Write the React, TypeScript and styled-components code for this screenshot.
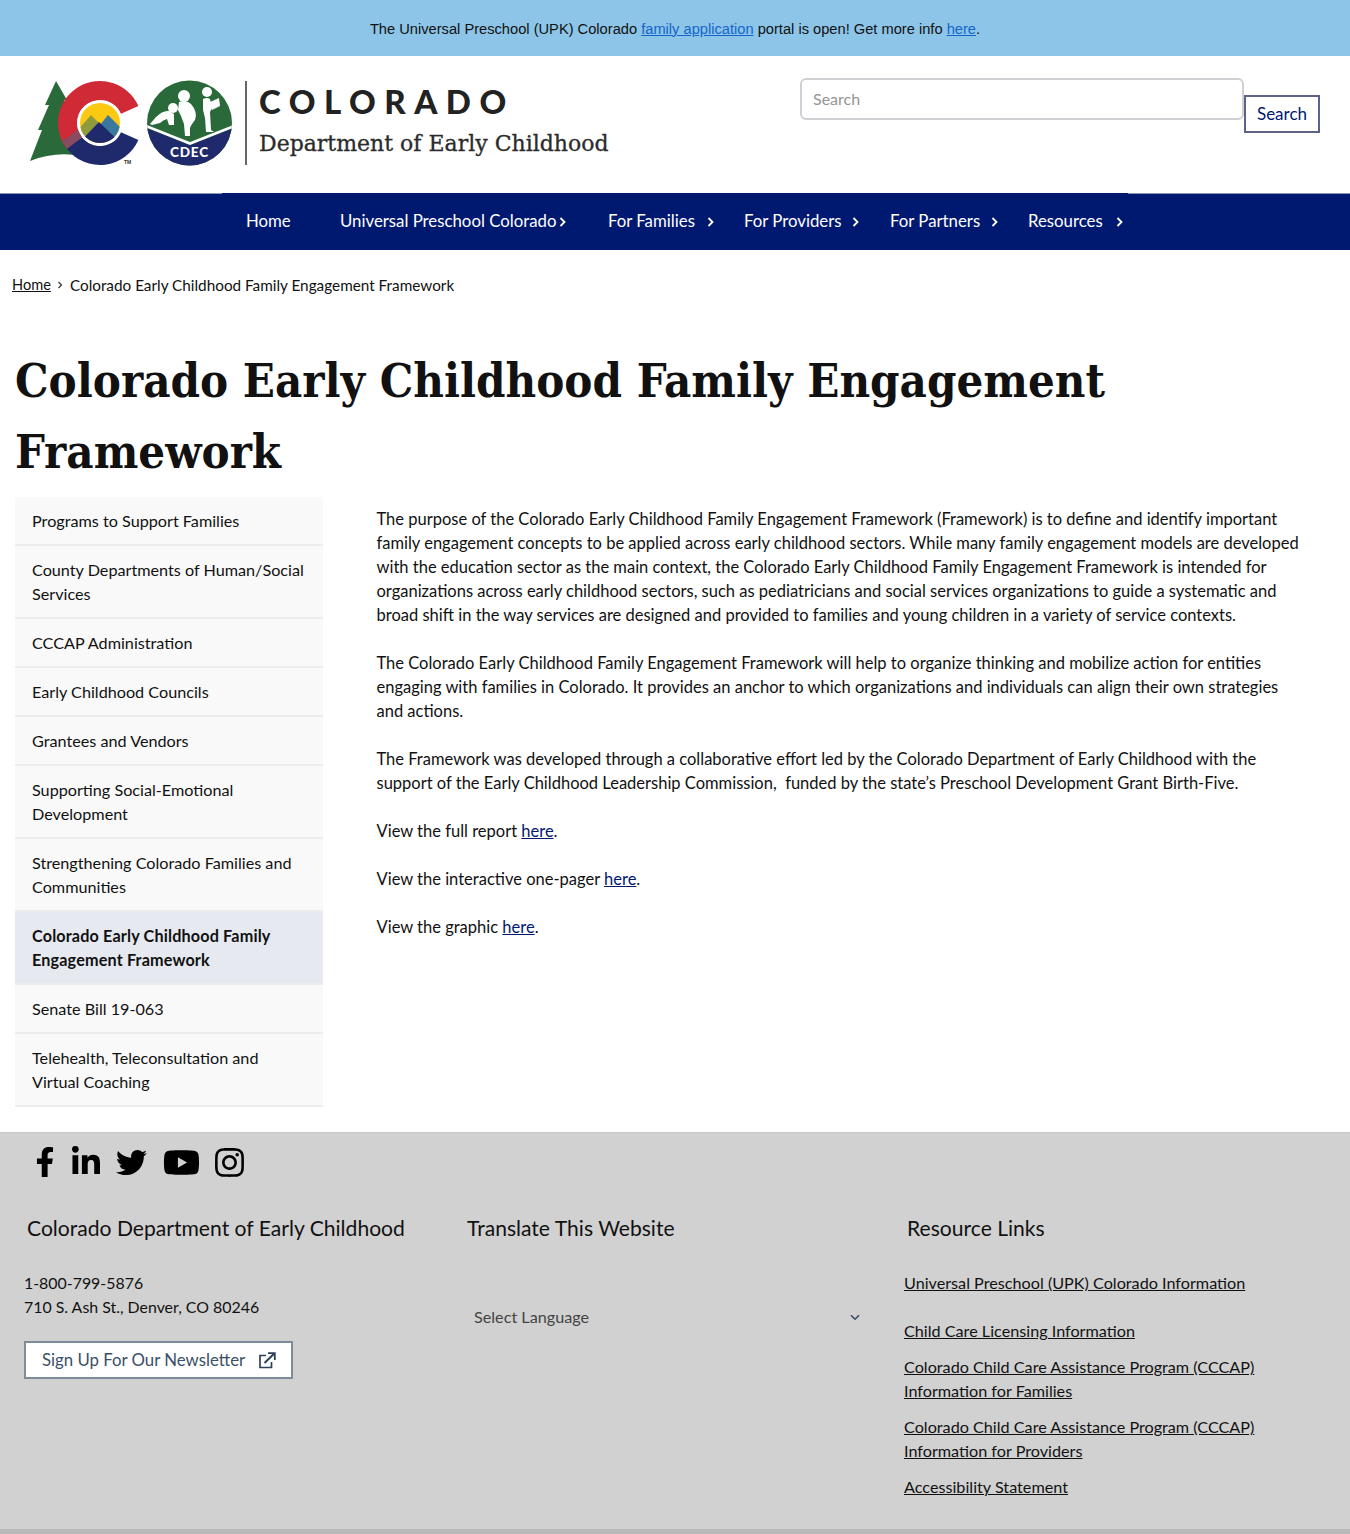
import React from "react";
import styled, { createGlobalStyle } from "styled-components";
import { FaFacebookF, FaLinkedinIn, FaTwitter, FaYoutube, FaInstagram } from "react-icons/fa";

const BODY = `"Lato", "Noto Sans", sans-serif`;
const SLAB = `"DejaVu Serif", "Liberation Serif", serif`;

const Global = createGlobalStyle`
  html, body { margin: 0; padding: 0; background: #fff; }
  body { font-family: ${BODY}; font-size: 16px; line-height: 24px; color: #111; }
  * { box-sizing: border-box; }
`;

const Banner = styled.div`
  height: 56px;
  padding-top: 1px;
  background: #8cc5e8;
  display: flex;
  align-items: center;
  justify-content: center;
  font-family: "Liberation Sans", Arial, sans-serif;
  font-size: 14.66px;
  color: #111;
  a { color: #1565c8; text-decoration: underline; }
`;

const Header = styled.header`
  height: 137px;
  display: flex;
  justify-content: space-between;
  padding: 22px 30px 0 30px;
`;

const Brand = styled.div`
  display: flex;
  align-items: flex-start;
  height: 90px;
`;

const Divider = styled.div`
  width: 2px;
  height: 84px;
  margin: 3px 12px 0 10px;
  background: #666;
`;

const Wordmark = styled.div`
  display: flex;
  flex-direction: column;
`;

const State = styled.div`
  font-family: "Lato", sans-serif;
  font-weight: 900;
  font-size: 33px;
  line-height: 40px;
  letter-spacing: 8.5px;
  color: #222;
  margin-top: 3px;
`;

const Dept = styled.div`
  font-family: ${SLAB};
  font-size: 22px;
  line-height: 30px;
  color: #2b2b2b;
  margin-top: 8px;
  -webkit-text-stroke: 0.3px #2b2b2b;
`;

const SearchForm = styled.form`
  display: flex;
  align-items: flex-start;
`;

const SearchInput = styled.input`
  width: 444px;
  height: 42px;
  border: 2px solid #d0d0d4;
  border-radius: 6px;
  padding: 0 11px 2px;
  font-family: ${BODY};
  font-size: 16px;
  &::placeholder { color: #949494; }
`;

const SearchButton = styled.button`
  width: 76px;
  height: 38px;
  margin-top: 17px;
  background: #fff;
  border: 2px solid #5c6288;
  font-family: ${BODY};
  font-size: 17px;
  color: #001970;
  padding: 0 0 2px;
`;

const NavBar = styled.nav`
  height: 57px;
  background: #001970;
  border-top: 1px solid #8797ad;
  padding-left: 222px;
`;

const NavList = styled.div`
  display: flex;
  width: 906px;
  height: 57px;
  margin-top: -1px;
  padding-bottom: 2px;
  background: #001970;
`;

const NavItem = styled.a<{ $w: number }>`
  position: relative;
  width: ${(p) => p.$w}px;
  padding: 0 0 0 24px;
  display: flex;
  align-items: center;
  color: #fff;
  font-size: 16.8px;
  white-space: nowrap;
`;

const NavChevron = styled.svg<{ $right: number }>`
  position: absolute;
  right: ${(p) => p.$right}px;
  top: 24px;
  width: 7px;
  height: 10px;
`;

const Crumbs = styled.div`
  display: flex;
  align-items: center;
  padding: 10px 12px 0;
  height: 60px;
  font-size: 15.3px;
  a { color: #111; text-decoration: underline; font-size: 14.6px; }
`;

const CrumbSep = styled.svg`
  width: 6px;
  height: 8px;
  margin: 0 7px 0 6px;
`;

const Title = styled.h1`
  font-family: "DejaVu Serif Condensed", ${SLAB};
  font-weight: 700;
  font-size: 46.9px;
  line-height: 71px;
  margin: 35px 0 0;
  padding: 0 15px;
  color: #111;
`;

const Main = styled.div`
  display: flex;
  padding: 10px 30px 25px 15px;
`;

const SideNav = styled.ul`
  list-style: none;
  margin: 0;
  padding: 0;
  width: 308px;
  flex: none;
`;

const SideItem = styled.li<{ $active?: boolean }>`
  padding: 12px 17px 11px;
  border-bottom: 2px solid #ececec;
  background: ${(p) => (p.$active ? "#e6e9ef" : "#f9f9f9")};
  font-size: 16.2px;
  font-weight: ${(p) => (p.$active ? 700 : 400)};
  letter-spacing: ${(p) => (p.$active ? "0.15px" : "0")};
  color: #111;
`;

const Content = styled.div`
  margin-left: 53.5px;
  margin-right: 15px;
  padding-top: 10px;
  flex: 1;
  font-size: 16.5px;
  p { margin: 0 0 24px; }
  a { color: #001970; text-decoration: underline; }
`;

const Footer = styled.footer`
  height: 402px;
  background: #d1d1d1;
  border-bottom: 5px solid #b9b9b9;
  border-top: 1px solid #c6c6c6;
  display: flex;
  flex-direction: column;
`;

const Socials = styled.div`
  display: flex;
  align-items: center;
  padding-left: 30px;
  height: 58px;
  color: #000;
  svg { display: block; }
`;

const SocialCell = styled.a<{ $w: number }>`
  width: ${(p) => p.$w}px;
  display: flex;
  justify-content: center;
`;

const Columns = styled.div`
  display: grid;
  grid-template-columns: 440px 440px 1fr;
  padding-left: 24px;
  margin-top: 24px;
`;

const FootHead = styled.h3`
  font-family: "Lato", sans-serif;
  font-weight: 400;
  font-size: 21.1px;
  line-height: 26px;
  margin: 0 0 30px 3px;
  color: #111;
`;

const Column = styled.div`
  font-size: 15.9px;
`;

const Newsletter = styled.a`
  display: inline-flex;
  align-items: center;
  width: 269px;
  height: 38px;
  margin-top: 22px;
  padding-left: 16px;
  background: #fff;
  border: 2px solid #7f8a9c;
  color: #3a5068;
  font-size: 16.8px;
  svg { margin-left: 13px; }
`;

const SelectRow = styled.div`
  display: flex;
  align-items: center;
  justify-content: space-between;
  margin: 64px 0 0 10px;
  width: 386px;
  color: #444;
  height: 24px;
  font-size: 16.2px;
`;

const LinkList = styled.div`
  display: flex;
  flex-direction: column;
  gap: 12px;
  max-width: 365px;
  font-size: 16.2px;
  a { color: #111; text-decoration: underline; }
  a:first-child { margin-bottom: 12px; }
`;

const Chevron = ({ right }: { right: number }) => (
  <NavChevron $right={right} viewBox="0 0 7 10">
    <path d="M1.5 1 L5.5 5 L1.5 9" fill="none" stroke="#fff" strokeWidth="1.8" />
  </NavChevron>
);

const Logo = () => (
  <svg width="205" height="90" viewBox="30 78 205 90">
    <defs>
      <clipPath id="inner"><circle cx="100" cy="123" r="20" /></clipPath>
      <clipPath id="cdec"><circle cx="189.5" cy="123" r="42.5" /></clipPath>
    </defs>
    <path d="M56 81 L67 100 L64 100 L74 122 L70 122 L82 156 Q55 151 30 161 L42 130 L38 130 L49 105 L45 105 Z" fill="#2a6a3a" />
    <path d="M138.37 105.92 A42 42 0 1 0 66.9 148.86 L81.88 137.16 A23 23 0 1 1 121.01 113.65 Z" fill="#cf2a36" />
    <path d="M66.9 148.86 A42 42 0 0 0 138.37 140.08 L121.01 132.35 A23 23 0 0 1 81.88 137.16 Z" fill="#1f2a6d" />
    <path d="M66.9 148.86 L62 141 L78 130 L81.88 137.16 Z" fill="#8a4a60" />
    <circle cx="100" cy="123" r="22.5" fill="#fff" />
    <circle cx="100" cy="123" r="20" fill="#fbc912" />
    <g clipPath="url(#inner)">
      <path d="M76 132 L91 115 L102 126 L95 140 Z" fill="#8f9a3a" />
      <path d="M100 125 L108 115 L124 131 L112 140 Z" fill="#3a789f" />
      <path d="M76 146 L99 122 L124 146 Z" fill="#1f2a6d" />
    </g>
    <text x="124" y="164" fontSize="5" fontFamily="Liberation Sans" fontWeight="700" fill="#333">TM</text>

    <circle cx="189.5" cy="123" r="42.5" fill="#2a6a3a" />
    <g clipPath="url(#cdec)">
      <path d="M146 128 L190 145 L234 128 L234 170 L146 170 Z" fill="#1f2a6d" />
      <path d="M146 126 L190 143.5 L234 126" fill="none" stroke="#fff" strokeWidth="2.6" />
    </g>
    <text x="189.5" y="156.5" textAnchor="middle" fontSize="13.5" fontWeight="900" letterSpacing="0.8" fontFamily="Lato, sans-serif" fill="#fff">CDEC</text>
    <g fill="#fff">
      <circle cx="173" cy="108" r="5" />
      <path d="M150 124 L156 117 Q163 110 169 111 L174 114 L174 125 L169 125 L167 119 Q163 120 160 123 L152 125 Z" />
      <circle cx="184" cy="96" r="6" />
      <path d="M179 102 Q186 99 191 104 Q198 112 195 120 Q191 125 190 128 L190 136 L185 136 L184 124 L181 116 L178 110 Z" />
      <circle cx="207" cy="92" r="5" />
      <path d="M203 99 Q207 97 210 99 L212 108 L210 112 L211 130 L214 132 L206 132 L205 118 L203 110 Z" />
      <path d="M210 102 L219 98 L220 106 L212 110 Z" />
    </g>
  </svg>
);

const ExternalIcon = () => (
  <svg width="18" height="17" viewBox="0 0 18 17" fill="none" stroke="#2d4159" strokeWidth="1.7">
    <path d="M8 3.5 H2 V15.5 H13.5 V10" />
    <path d="M6.5 11 L16 1.8" strokeWidth="2" />
    <path d="M10 1.2 H16.8 V8" strokeWidth="1.8" />
  </svg>
);

const sideItems = [
  "Programs to Support Families",
  "County Departments of Human/Social Services",
  "CCCAP Administration",
  "Early Childhood Councils",
  "Grantees and Vendors",
  "Supporting Social-Emotional Development",
  "Strengthening Colorado Families and Communities",
  "Colorado Early Childhood Family Engagement Framework",
  "Senate Bill 19-063",
  "Telehealth, Teleconsultation and Virtual Coaching",
];

const navItems: [string, number, number | null][] = [
  ["Home", 94, null],
  ["Universal Preschool Colorado", 268, 18],
  ["For Families", 136, 6],
  ["For Providers", 146, 7],
  ["For Partners", 138, 6],
  ["Resources", 124, 5],
];

export default function App() {
  return (
    <>
      <Global />
      <Banner>
        <span>
          The Universal Preschool (UPK) Colorado <a>family application</a> portal is open! Get more info <a>here</a>.
        </span>
      </Banner>
      <Header>
        <Brand>
          <Logo />
          <Divider />
          <Wordmark>
            <State>COLORADO</State>
            <Dept>Department of Early Childhood</Dept>
          </Wordmark>
        </Brand>
        <SearchForm>
          <SearchInput placeholder="Search" />
          <SearchButton type="button">Search</SearchButton>
        </SearchForm>
      </Header>
      <NavBar>
        <NavList>
          {navItems.map(([label, w, right]) => (
            <NavItem key={label} $w={w}>
              {label}
              {right !== null && <Chevron right={right} />}
            </NavItem>
          ))}
        </NavList>
      </NavBar>
      <Crumbs>
        <a>Home</a>
        <CrumbSep viewBox="0 0 6 8">
          <path d="M1.5 1 L4.5 4 L1.5 7" fill="none" stroke="#333" strokeWidth="1.2" />
        </CrumbSep>
        <span>Colorado Early Childhood Family Engagement Framework</span>
      </Crumbs>
      <Title>Colorado Early Childhood Family Engagement Framework</Title>
      <Main>
        <SideNav>
          {sideItems.map((s, i) => (
            <SideItem key={s} $active={i === 7}>{s}</SideItem>
          ))}
        </SideNav>
        <Content>
          <p>
            The purpose of the Colorado Early Childhood Family Engagement Framework (Framework) is to define and identify important family engagement concepts to be applied across early childhood sectors. While many family engagement models are developed with the education sector as the main context, the Colorado Early Childhood Family Engagement Framework is intended for organizations across early childhood sectors, such as pediatricians and social services organizations to guide a systematic and broad shift in the way services are designed and provided to families and young children in a variety of service contexts.
          </p>
          <p>
            The Colorado Early Childhood Family Engagement Framework will help to organize thinking and mobilize action for entities engaging with families in Colorado. It provides an anchor to which organizations and individuals can align their own strategies and actions.
          </p>
          <p>
            The Framework was developed through a collaborative effort led by the Colorado Department of Early Childhood with the support of the Early Childhood Leadership Commission,&nbsp; funded by the state’s Preschool Development Grant Birth-Five.
          </p>
          <p>View the full report <a>here</a>.</p>
          <p>View the interactive one-pager <a>here</a>.</p>
          <p>View the graphic <a>here</a>.</p>
        </Content>
      </Main>
      <Footer>
        <Socials>
          <SocialCell $w={30}><FaFacebookF size={30} /></SocialCell>
          <SocialCell $w={51}><FaLinkedinIn size={32} /></SocialCell>
          <SocialCell $w={41}><FaTwitter size={31} /></SocialCell>
          <SocialCell $w={59}><FaYoutube size={37} /></SocialCell>
          <SocialCell $w={37}><FaInstagram size={33} /></SocialCell>
        </Socials>
        <Columns>
          <Column>
            <FootHead>Colorado Department of Early Childhood</FootHead>
            <div>1-800-799-5876</div>
            <div>710 S. Ash St., Denver, CO 80246</div>
            <Newsletter>Sign Up For Our Newsletter<ExternalIcon /></Newsletter>
          </Column>
          <Column>
            <FootHead>Translate This Website</FootHead>
            <SelectRow>
              Select Language
              <svg width="10" height="7" viewBox="0 0 10 7">
                <path d="M1 1.2 L5 5.2 L9 1.2" fill="none" stroke="#3a4a6a" strokeWidth="1.6" />
              </svg>
            </SelectRow>
          </Column>
          <Column>
            <FootHead>Resource Links</FootHead>
            <LinkList>
              <a>Universal Preschool (UPK) Colorado Information</a>
              <a>Child Care Licensing Information</a>
              <a>Colorado Child Care Assistance Program (CCCAP) Information for Families</a>
              <a>Colorado Child Care Assistance Program (CCCAP) Information for Providers</a>
              <a>Accessibility Statement</a>
            </LinkList>
          </Column>
        </Columns>
      </Footer>
    </>
  );
}
